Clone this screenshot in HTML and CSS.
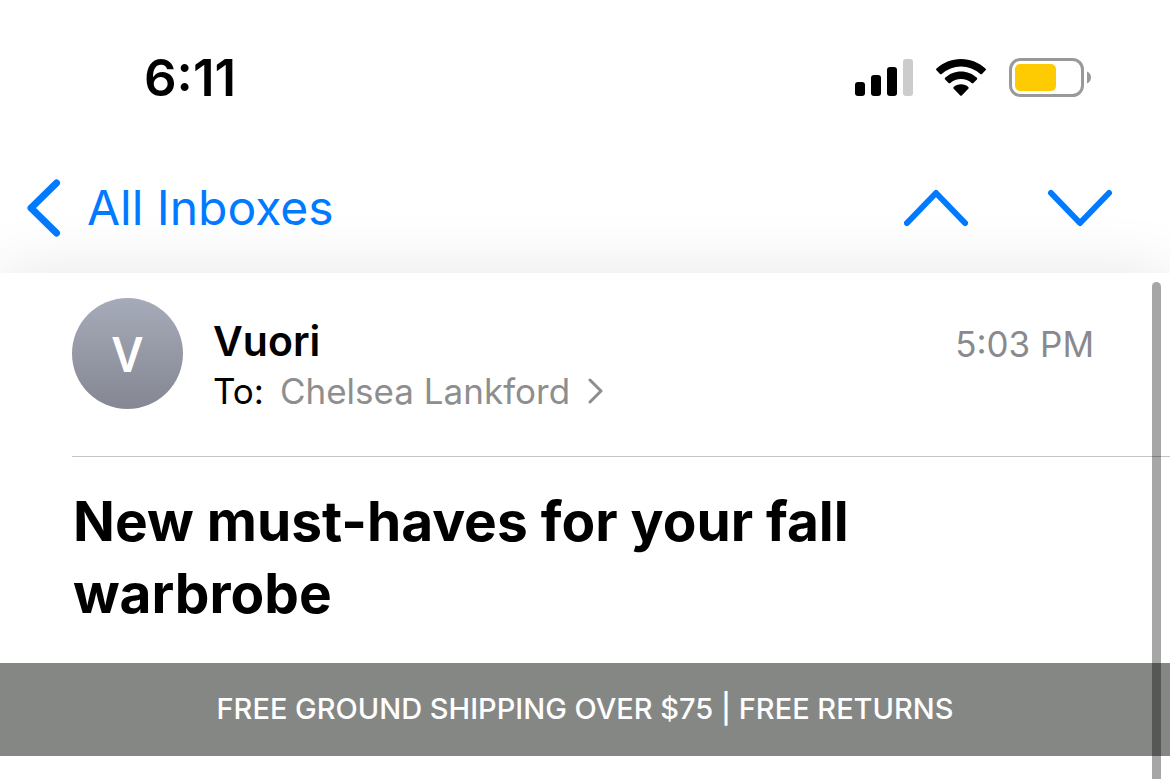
FILE: index.html
```html
<!DOCTYPE html>
<html lang="en">
  <head>
    <meta charset="UTF-8" />
    <meta name="viewport" content="width=device-width, initial-scale=1.0" />
    <title>All Inboxes</title>
    <link rel="stylesheet" href="styles.css">
  </head>
  <body>
    <div class="top">
      <div class="status-bar">
        <time class="clock">6:11</time>
        <div class="status-icons">
          <svg class="signal" width="58" height="38" viewBox="0 0 58 38">
            <rect x="0" y="23" width="10" height="14" rx="3" />
            <rect x="16" y="16" width="10" height="21" rx="3" />
            <rect x="32" y="8" width="10" height="29" rx="3" />
            <rect x="48" y="0" width="10" height="37" rx="3" fill="#cccccc" />
          </svg>
          <svg class="wifi" width="50" height="38" viewBox="0 0 50 38">
            <path d="M25 0C34.500 0 43 3.600 49.500 9.500Q50.400 10.400 49.500 11.300L46 14.900Q45.200 15.700 44.300 14.900A29 29 0 0 0 5.700 14.900Q4.800 15.700 4 14.900L0.500 11.300Q-0.400 10.400 0.500 9.500C7 3.600 15.500 0 25 0Z" />
            <path d="M25 12.500C31.200 12.500 36.700 14.900 40.900 18.800Q41.800 19.700 40.900 20.600L37.400 24.100Q36.600 24.900 35.700 24.100A16 16 0 0 0 14.300 24.100Q13.400 24.900 12.600 24.100L9.100 20.600Q8.200 19.700 9.100 18.800C13.300 14.900 18.800 12.500 25 12.500Z" />
            <path d="M25 25.200C27.900 25.200 30.400 26.300 32.300 27.900Q33.200 28.800 32.300 29.700L26 36.200Q25 37.200 24 36.200L17.700 29.700Q16.800 28.800 17.700 27.900C19.600 26.300 22.100 25.200 25 25.200Z" />
          </svg>
          <svg class="battery" width="82" height="40" viewBox="0 0 82 40">
            <rect x="1.500" y="1.500" width="72" height="36" rx="10" fill="#fff" stroke="#999" stroke-width="3" />
            <rect x="6" y="6" width="41" height="27" rx="5" fill="#fecb02" />
            <path d="M78 13.500C80.500 14.500 82 16.800 82 19.500S80.500 24.500 78 25.500Z" fill="#999" />
          </svg>
        </div>
      </div>

      <nav class="navbar">
        <a class="back" href="#">
          <svg width="34" height="58" viewBox="0 0 34 58">
            <path d="M29.500 4L4 29L29.500 54" stroke-width="7" />
          </svg>
          All Inboxes
        </a>
        <div class="arrows">
          <button type="button" aria-label="Previous message">
            <svg width="64" height="38" viewBox="0 0 64 38">
              <path d="M3 34L32 4L61 34" stroke-width="6" />
            </svg>
          </button>
          <button type="button" aria-label="Next message">
            <svg width="64" height="38" viewBox="0 0 64 38">
              <path d="M3 4L32 34L61 4" stroke-width="6" />
            </svg>
          </button>
        </div>
      </nav>
    </div>

    <main class="message">
      <header class="sender">
        <div class="avatar">
          <span>V</span>
        </div>
        <div class="details">
          <div class="name">Vuori</div>
          <div class="to">
            To:
            <a href="#">
              Chelsea Lankford
              <svg width="16" height="26" viewBox="0 0 16 26">
                <path d="M2 2L13 13L2 24" stroke-width="3" />
              </svg>
            </a>
          </div>
        </div>
        <time class="sent">5:03 PM</time>
      </header>
      <h1>New must-haves for your fall warbrobe</h1>
      <div class="banner">FREE GROUND SHIPPING OVER $75 | FREE RETURNS</div>
      <div class="scrollbar"></div>
    </main>
  </body>
</html>
```
FILE: styles.css
```css
* {
  box-sizing: border-box;
}

body {
  display: flex;
  flex-direction: column;
  min-height: 100vh;
  margin: 0;
  overflow: hidden;
  background-color: #fff;
  color: #000;
  font-family: Inter, "Liberation Sans", sans-serif;
}

a {
  color: inherit;
  text-decoration: none;
}

svg {
  display: block;
  flex-shrink: 0;
}

.status-bar {
  display: flex;
  justify-content: space-between;
  align-items: center;
  padding: 48px 79px 32px 144px;
}

.clock {
  font-size: 51px;
  line-height: 60px;
  font-weight: 600;
}

.status-icons {
  display: flex;
  align-items: center;
  gap: 23px;
}

.navbar {
  display: flex;
  justify-content: space-between;
  align-items: center;
  padding: 38px 58px 35px 27px;
  color: #007aff;
}

.back {
  display: flex;
  align-items: center;
  gap: 26px;
  font-size: 48px;
  line-height: 60px;
}

.back svg,
.arrows svg,
.to svg {
  fill: none;
  stroke: currentColor;
  stroke-linecap: round;
  stroke-linejoin: round;
}

.arrows {
  display: flex;
  gap: 80px;
}

.arrows button {
  padding: 0;
  border: none;
  background: none;
  color: inherit;
  cursor: pointer;
}

.message {
  position: relative;
  flex: 1;
  background-color: #fff;
  box-shadow: 0 0 60px rgba(0, 0, 0, 0.1);
}

.top {
  position: relative;
}

.sender {
  display: flex;
  align-items: flex-start;
  gap: 30px;
  margin-left: 72px;
  padding: 25px 76px 40px 0;
  border-bottom: 1px solid #c4c4c6;
}

.avatar {
  display: flex;
  justify-content: center;
  align-items: center;
  width: 111px;
  height: 111px;
  border-radius: 50%;
  background: linear-gradient(to bottom, #a5abb9, #858792);
  color: #fff;
  font-family: "Noto Sans", sans-serif;
  font-size: 48px;
  font-weight: 600;
}

.details {
  flex: 1;
  padding-top: 18px;
}

.name {
  font-size: 41px;
  line-height: 50px;
  font-weight: 600;
}

.to {
  display: flex;
  gap: 16px;
  font-size: 35px;
  line-height: 50px;
}

.to a {
  display: flex;
  align-items: center;
  gap: 18px;
  color: #8e8e8e;
}

.sent {
  padding-top: 21px;
  color: #8a8a8e;
  font-size: 35px;
  line-height: 50px;
}

h1 {
  max-width: 900px;
  margin: 0 0 0 73px;
  padding: 28px 0 34px;
  font-size: 55px;
  line-height: 72px;
  font-weight: 700;
}

.banner {
  padding: 22px 16px 23px;
  background-color: #858785;
  color: #fff;
  font-size: 29px;
  line-height: 48px;
  font-weight: 500;
  text-align: center;
}

.scrollbar {
  position: absolute;
  top: 9px;
  right: 9px;
  bottom: 0;
  width: 9px;
  border-radius: 5px 5px 0 0;
  background-color: rgba(0, 0, 0, 0.35);
}
```
